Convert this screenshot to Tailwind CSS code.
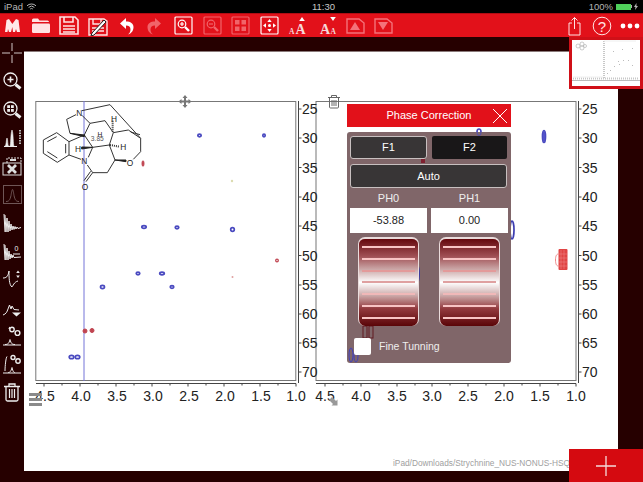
<!doctype html>
<html>
<head>
<meta charset="utf-8">
<script src="https://cdn.jsdelivr.net/npm/@tailwindcss/browser@4"></script>
</head>
<body class="m-0 bg-[#260000]">
<div class="relative w-[643px] h-[482px] overflow-hidden flex flex-col bg-[#260000] font-['Liberation_Sans',Arial,sans-serif]">

  <!-- status bar -->
  <div class="h-[13px] bg-black flex items-center px-1 text-[9.5px] leading-none text-[#b5b5b5] shrink-0">
    <span>iPad</span>
    <svg class="ml-[3px]" width="11" height="8" viewBox="0 0 11 8" fill="none" stroke="#b5b5b5" stroke-width="1"><path d="M1 2.8a6.5 6.5 0 0 1 9 0M2.6 4.4a4.2 4.2 0 0 1 5.8 0M4.2 6a2 2 0 0 1 2.6 0"/></svg>
    <span class="absolute left-[312px] top-[2px] text-[#c8c8c8]">11:30</span>
    <span class="ml-auto">100%</span>
    <span class="ml-[3px] w-[15px] h-[6px] bg-[#4fd05a] block"></span>
    <span class="w-[1px] h-[3px] bg-[#aaa] block"></span>
    <svg class="ml-[2px] mr-[1px]" width="4" height="7" viewBox="0 0 4 7"><path d="M2.5 0 0 4h1.5L1 7l3-4H2.4z" fill="#b5b5b5"/></svg>
  </div>

  <!-- toolbar -->
  <div class="h-[24px] bg-[#e2111a] flex items-center shrink-0 border-t border-[#b00c13]">
    <div class="flex -ml-[2.3px]">
      <div class="w-[28.6px] h-[24px] flex items-center justify-center">
        <svg width="17" height="15" viewBox="0 0 17 15"><path d="M1 14 2.5 2 5 1l3.3 5L12 1l2.5 1L16 14h-3l-1-3-1 3H9L8.3 9 7 14H5l-1-3-.5 3z" fill="#ffe9e9"/></svg>
      </div>
      <div class="w-[28.6px] h-[24px] flex items-center justify-center">
        <svg width="20" height="17" viewBox="0 0 20 17" fill="#ffe3e3"><path d="M1 3q0-1.500 1.500-1.500h4.500l1.500 2h8q1.500 0 1.500 1.500V5H1z"/><rect x="1" y="6.500" width="18" height="9.500" rx="1.200"/></svg>
      </div>
      <div class="w-[28.6px] h-[24px] flex items-center justify-center">
        <svg width="20" height="19" viewBox="0 0 20 19" fill="none" stroke="#ffe3e3" stroke-width="1.600"><path d="M1 1h15l3 3v14H1z"/><path d="M5 1v5h9V1M4 10h12M4 13h12M4 16h12"/></svg>
      </div>
      <div class="w-[28.6px] h-[24px] flex items-center justify-center">
        <svg width="22" height="20" viewBox="0 0 22 20" fill="none" stroke="#ffe3e3" stroke-width="1.400"><path d="M2 3h15l3 2v14H2z"/><path d="M6 3v5h8V3M5 12h12M5 15h12"/><path d="M5 17 17 4l2 2L7 19l-3 1z" fill="#fff" stroke="#222" stroke-width="1"/></svg>
      </div>
      <div class="w-[28.6px] h-[24px] flex items-center justify-center">
        <svg width="15" height="18" viewBox="0 0 15 18"><path d="M7 1 1 6.500 7 12V8.500c3 0 4.500 1.500 4.500 4 0 2-1 4-2.500 5 3.500-1 5.500-4 5.500-7.500C14.500 6.500 11.500 4.500 7 4.500z" fill="#fff"/></svg>
      </div>
      <div class="w-[28.6px] h-[24px] flex items-center justify-center">
        <svg width="15" height="18" viewBox="0 0 15 18"><path d="M8 1l6 5.500L8 12V8.500c-3 0-4.500 1.500-4.500 4 0 2 1 4 2.500 5-3.500-1-5.500-4-5.500-7.500C.5 6.500 3.500 4.500 8 4.500z" fill="#f1646a"/></svg>
      </div>
      <div class="w-[28.6px] h-[24px] flex items-center justify-center">
        <svg width="19" height="19" viewBox="0 0 19 19" fill="none" stroke="#fff" stroke-width="1.200"><rect x="1" y="1" width="17" height="17" rx="1"/><circle cx="8" cy="8" r="3.800"/><path d="M6 8h4M8 6v4"/><path d="M11 11l4 4" stroke-width="2.400"/></svg>
      </div>
      <div class="w-[28.6px] h-[24px] flex items-center justify-center">
        <svg width="19" height="19" viewBox="0 0 19 19" fill="none" stroke="#f1646a" stroke-width="1.200"><rect x="1" y="1" width="17" height="17" rx="1"/><circle cx="8" cy="8" r="3.800"/><path d="M6 8h4"/><path d="M11 11l4 4" stroke-width="2.400"/></svg>
      </div>
      <div class="w-[28.6px] h-[24px] flex items-center justify-center">
        <svg width="19" height="19" viewBox="0 0 19 19" fill="#f1646a" stroke="#f1646a" stroke-width="1.200"><rect x="1" y="1" width="17" height="17" rx="1" fill="none"/><rect x="4" y="4" width="4.500" height="4.500" stroke="none"/><rect x="10.500" y="4" width="4.500" height="4.500" stroke="none"/><rect x="4" y="10.500" width="4.500" height="4.500" stroke="none"/><rect x="10.500" y="10.500" width="4.500" height="4.500" stroke="none"/></svg>
      </div>
      <div class="w-[28.6px] h-[24px] flex items-center justify-center">
        <svg width="19" height="19" viewBox="0 0 19 19" fill="#fff"><rect x="1" y="1" width="17" height="17" rx="1" fill="none" stroke="#fff" stroke-width="1.200"/><path d="M9.500 3l2.200 3h-4.400zM9.500 16l2.200-3h-4.400zM3 9.500l3-2.200v4.400zM16 9.500l-3-2.200v4.400z"/><circle cx="9.500" cy="9.500" r="1.500"/></svg>
      </div>
      <div class="w-[28.6px] h-[24px] flex items-center justify-center">
        <svg width="24" height="24" viewBox="0 0 24 24" fill="#f6d8d8" font-family="'Liberation Serif',serif" font-weight="700"><text x="3" y="20" font-size="7.500">A</text><text x="9.500" y="20" font-size="14">A</text><path d="M18 3l2.800 4h-5.600z" fill="#fff" transform="translate(-2 0)"/></svg>
      </div>
      <div class="w-[28.6px] h-[24px] flex items-center justify-center">
        <svg width="24" height="24" viewBox="0 0 24 24" fill="#f6d8d8" font-family="'Liberation Serif',serif" font-weight="700"><text x="5" y="20" font-size="14">A</text><text x="15.500" y="20" font-size="7.500">A</text><path d="M18 7l2.800-4h-5.600z" fill="#fff"/></svg>
      </div>
      <div class="w-[28.6px] h-[24px] flex items-center justify-center">
        <svg width="19" height="16" viewBox="0 0 19 16" fill="none" stroke="#f4727a" stroke-width="1.400"><path d="M1 1h12l5 4v10H1z"/><path d="M4 12l5-8 5 8z" fill="#f4727a" stroke="none"/></svg>
      </div>
      <div class="w-[28.6px] h-[24px] flex items-center justify-center">
        <svg width="19" height="16" viewBox="0 0 19 16" fill="none" stroke="#f4727a" stroke-width="1.400"><path d="M1 1h12l5 4v10H1z"/><path d="M4 4l5 8 5-8z" fill="#f4727a" stroke="none"/></svg>
      </div>
    </div>
    <div class="flex ml-auto -mr-[1px]">
      <div class="w-[28px] h-[24px] flex items-center justify-center">
        <svg width="13" height="20" viewBox="0 0 13 20" fill="none" stroke="#ffe3e3" stroke-width="1"><path d="M4 7H1v12h11V7H9"/><path d="M6.500 13V1.500M3.500 4.500l3-3 3 3"/></svg>
      </div>
      <div class="w-[28px] h-[24px] flex items-center justify-center">
        <svg width="20" height="20" viewBox="0 0 20 20"><circle cx="10" cy="10" r="8.800" fill="none" stroke="#ffe3e3" stroke-width="1"/><text x="10" y="15.500" font-size="15" text-anchor="middle" fill="#ffe3e3" font-family="'Liberation Sans',sans-serif">?</text></svg>
      </div>
      <div class="w-[28px] h-[24px] flex items-center justify-center">
        <svg width="20" height="6" viewBox="0 0 20 6" fill="#fff"><circle cx="3" cy="3" r="2.400"/><circle cx="10" cy="3" r="2.400"/><circle cx="17" cy="3" r="2.400"/></svg>
      </div>
    </div>
  </div>

  <!-- main -->
  <div class="flex flex-1 min-h-0">
    <!-- sidebar -->
    <div class="w-[24px] pt-[2px] shrink-0 flex flex-col">
      <div class="h-[28.25px] flex items-center justify-center"><svg width="20" height="20" viewBox="0 0 20 20" stroke="#cfc5c5" stroke-width="1"><path d="M0 10h8M12 10h8M10 0v8M10 12v8"/></svg></div>
      <div class="h-[28.25px] flex items-center justify-center"><svg width="20" height="20" viewBox="0 0 20 20" fill="none" stroke="#eee" stroke-width="1.300"><circle cx="8.500" cy="8.500" r="6.500"/><path d="M5.500 8.500h6M8.500 5.500v6" stroke-width="1.600"/><path d="M13.500 13.500l5 4" stroke-width="3"/></svg></div>
      <div class="h-[28.25px] flex items-center justify-center"><svg width="20" height="20" viewBox="0 0 20 20" fill="none" stroke="#eee" stroke-width="1.300"><circle cx="8.500" cy="8.500" r="6.500"/><path d="M13.500 13.500l5 4" stroke-width="3"/><g fill="#eee" stroke="none"><rect x="5.200" y="5.200" width="2.800" height="2.800"/><rect x="9" y="5.200" width="2.800" height="2.800"/><rect x="5.200" y="9" width="2.800" height="2.800"/><rect x="9" y="9" width="2.800" height="2.800"/></g></svg></div>
      <div class="h-[28.25px] flex items-center justify-center"><svg width="20" height="20" viewBox="0 0 20 20" fill="none" stroke="#eee"><path d="M2 18.500h13" stroke-width="1"/><path d="M3 18C4.500 17 4 12 5 10c1 2 .5 7 1.500 8M8 18c1-1 .5-13 2-16 1.500 3 1 15 2 16" fill="#eee" stroke-width=".6"/><path d="M18 2v15" stroke-dasharray="1.500 1" stroke-width="2" stroke="#bbb"/></svg></div>
      <div class="h-[28.25px] flex items-center justify-center"><svg width="20" height="20" viewBox="0 0 20 20" fill="none" stroke="#ddd" stroke-width="1"><rect x="1" y="7" width="18" height="12"/><path d="M5 7V2h14v5" stroke-dasharray="2 1"/><path d="M6 9l8 8M14 9l-8 8" stroke-width="2.800"/><path d="M8 4h6" stroke-width="2"/></svg></div>
      <div class="h-[28.25px] flex items-center justify-center"><svg width="19" height="19" viewBox="0 0 19 19" fill="none" stroke="#6f5656" stroke-width="1"><rect x=".5" y=".5" width="18" height="18"/><path d="M3 16.500c3 0 4-1.500 5-6 .5-3 1-6 1.500-6s1 3 1.500 6c1 4.500 2 6 5 6"/></svg></div>
      <div class="h-[28.25px] flex items-center justify-center"><svg width="20" height="20" viewBox="0 0 20 20" fill="none" stroke="#eee" stroke-width="1"><path d="M2 1 3 19M3 2 4 19 5 5l1 14L7 8l1 10 1-7 1 6 1-4 1 3.500 1-3 1 2.500 1-2 1 1.500 3-1"/></svg></div>
      <div class="h-[28.25px] flex items-center justify-center"><svg width="20" height="20" viewBox="0 0 20 20" fill="none" stroke="#eee" stroke-width="1"><path d="M2 3 3 19M3 4 4 19 5 7l1 12L7 10l1 8 1-5 1 4 1-3 1 2.500 7-.5"/><text x="14.500" y="10" font-size="7" fill="#eee" stroke="none" text-anchor="middle" font-family="'Liberation Sans',sans-serif">0</text><path d="M11 13h7"/></svg></div>
      <div class="h-[28.25px] flex items-center justify-center"><svg width="20" height="20" viewBox="0 0 20 20" fill="none" stroke="#eee" stroke-width="1"><path d="M1 9c3 0 5-1 6-7 0 6 0 14 3 16 1-1 2-5 6-6"/><path d="M16 1.500l-1.800 2.500h3.600zM16 9l-1.800-2.500h3.600z" fill="#eee" stroke="none"/></svg></div>
      <div class="h-[28.25px] flex items-center justify-center"><svg width="20" height="20" viewBox="0 0 20 20" fill="none" stroke="#eee" stroke-width="1"><path d="M1 18c3-1 4-3 5-6l1.500-4 1.500 4 1-3 2 3.500 5 .5"/><path d="M10 15.500h9l-4.500 4z" fill="#eee" stroke="none"/></svg></div>
      <div class="h-[28.25px] flex items-center justify-center"><svg width="20" height="20" viewBox="0 0 20 20" fill="none" stroke="#eee" stroke-width="1"><path d="M1 19h18M3 18.500c3 0 4-1 5-5 1 4 2 5 5 5"/><circle cx="10" cy="3.500" r="2.200" stroke-width="1.400"/><circle cx="15.500" cy="7" r="2.400" stroke-width="1.400"/><path d="M7 3l1-2" stroke-width="1.400"/></svg></div>
      <div class="h-[28.25px] flex items-center justify-center"><svg width="20" height="20" viewBox="0 0 20 20" fill="none" stroke="#eee" stroke-width="1"><path d="M1 19h18M6 18.500c2 0 3-1 4-5 1 4 1.500 5 3 5"/><path d="M3 17c0-5 1-14 2-14.500" /><circle cx="11" cy="3.500" r="2" stroke-width="1.400"/><circle cx="16" cy="7" r="2.200" stroke-width="1.400"/></svg></div>
      <div class="h-[28.25px] flex items-center justify-center"><svg width="16" height="19" viewBox="0 0 16 19" fill="none" stroke="#eee" stroke-width="1.300"><path d="M0 3.500h16M5 3.500V1h6v2.500"/><path d="M2 3.500v13q0 1.500 1.500 1.500h9q1.500 0 1.500-1.500v-13"/><path d="M5.500 6v9M8 6v9M10.500 6v9" stroke-width="1.200"/></svg></div>
    </div>

    <!-- right part -->
    <div class="flex-1 flex flex-col min-w-0">
      <div class="h-[14px] shrink-0"></div>
      <div class="relative w-[594px] h-[420px] bg-white border-t border-[#8a7a7a]">
        <!-- free canvas: spectra -->
        <svg class="absolute left-0 top-[-1px]" width="594" height="420" viewBox="24 51 594 420" font-family="'Liberation Sans',Arial,sans-serif" font-size="14" fill="#222">
          <rect x="35.800" y="101.500" width="260" height="279" fill="none" stroke="#777" stroke-width="1"/>
          <rect x="316" y="101.500" width="260" height="279" fill="none" stroke="#777" stroke-width="1"/>
          <g stroke="#444" stroke-width="1" fill="none">
            <path d="M36 383.500h260M44 383.500v3M80 383.500v3M116 383.500v3M152 383.500v3M188 383.500v3M224 383.500v3M260 383.500v3M296 383.500v3M62 383.500v2M98 383.500v2M134 383.500v2M170 383.500v2M206 383.500v2M242 383.500v2M278 383.500v2"/>
            <path d="M316 383.500h260M325 383.500v3M361 383.500v3M397 383.500v3M432 383.500v3M468 383.500v3M504 383.500v3M540 383.500v3M576 383.500v3M343 383.500v2M379 383.500v2M415 383.500v2M450 383.500v2M486 383.500v2M522 383.500v2M558 383.500v2"/>
            <path d="M298.500 101v282M298.500 109h3M298.500 138h3M298.500 167.500h3M298.500 197h3M298.500 226h3M298.500 255.500h3M298.500 285h3M298.500 314h3M298.500 343h3M298.500 372h3"/>
            <path d="M578.500 101v282M578.500 109h3M578.500 138h3M578.500 167.500h3M578.500 197h3M578.500 226h3M578.500 255.500h3M578.500 285h3M578.500 314h3M578.500 343h3M578.500 372h3"/>
          </g>
          <g text-anchor="middle">
            <text x="45" y="401">4.5</text><text x="81" y="401">4.0</text><text x="117" y="401">3.5</text><text x="153" y="401">3.0</text><text x="189" y="401">2.5</text><text x="225" y="401">2.0</text><text x="261" y="401">1.5</text><text x="296" y="401">1.0</text>
            <text x="325" y="401">4.5</text><text x="361" y="401">4.0</text><text x="397" y="401">3.5</text><text x="432" y="401">3.0</text><text x="468" y="401">2.5</text><text x="504" y="401">2.0</text><text x="540" y="401">1.5</text><text x="576" y="401">1.0</text>
          </g>
          <g>
            <text x="302" y="114">25</text><text x="302" y="143">30</text><text x="302" y="172.500">35</text><text x="302" y="202">40</text><text x="302" y="231">45</text><text x="302" y="260.500">50</text><text x="302" y="290">55</text><text x="302" y="319">60</text><text x="302" y="348">65</text><text x="302" y="377">70</text>
            <text x="582" y="114">25</text><text x="582" y="143">30</text><text x="582" y="172.500">35</text><text x="582" y="202">40</text><text x="582" y="231">45</text><text x="582" y="260.500">50</text><text x="582" y="290">55</text><text x="582" y="319">60</text><text x="582" y="348">65</text><text x="582" y="377">70</text>
          </g>
          <path d="M84 101v280" stroke="#7474d8" stroke-width="1"/>
          <g fill="none" stroke="#4a4ac0" stroke-width="1.700">
            <ellipse cx="199.500" cy="135.500" rx="1.700" ry="1.300"/><ellipse cx="264" cy="135.500" rx="1.200" ry="1.300"/>
            <ellipse cx="144" cy="227" rx="2.200" ry="1.300"/><ellipse cx="177" cy="227.500" rx="1.800" ry="1.300"/><ellipse cx="232.500" cy="229.500" rx="1.800" ry="1.800"/>
            <ellipse cx="138" cy="273.500" rx="1.800" ry="1.300"/><ellipse cx="162" cy="273.500" rx="2.300" ry="1.300"/><ellipse cx="172" cy="287" rx="1.800" ry="1.300"/><ellipse cx="102.500" cy="287" rx="2" ry="1.600"/>
            <ellipse cx="71.500" cy="357" rx="2.300" ry="1.700"/><ellipse cx="77.500" cy="357" rx="2.300" ry="1.700"/>
            <ellipse cx="544" cy="136.500" rx="1.500" ry="6" fill="#5a5ad0"/><ellipse cx="512" cy="230" rx="2" ry="9" stroke="#3c3cb0"/><ellipse cx="479" cy="132" rx="2" ry="3"/>
          </g>
          <g fill="#c04450" stroke="#c04450" stroke-width="1">
            <ellipse cx="143" cy="163.500" rx="1" ry="2.800"/><ellipse cx="85" cy="331" rx="2" ry="2"/><ellipse cx="92" cy="330.500" rx="2" ry="2"/>
            <ellipse cx="277" cy="260.500" rx="1.300" ry="1.300" fill="none" stroke-width="1.300"/>
          </g>
          <circle cx="232" cy="181" r="1.200" fill="#dcdcb0"/><circle cx="232.500" cy="277" r="1" fill="#e0a0a0"/>
          <rect x="558.500" y="249" width="9" height="21" rx="1" fill="#e04444"/><path d="M558.500 254c-2 0-3 2-3 6s1 6 3 6" fill="none" stroke="#ee8888"/>
          <g stroke="#f08a8a" stroke-width=".5"><path d="M561 250v19M564 250v19M559 254h8M559 258h8M559 262h8M559 266h8"/></g>
          <g fill="#777"><path d="M185 95l2.500 3h-1.500v2.500h2.500V99l3 2.500-3 2.500v-1.500h-2.500v2.500h1.500l-2.500 3-2.500-3h1.500v-2.500h-2.500v1.500l-3-2.500 3-2.500v1.500h2.500V98h-1.500z"/></g>
          <g fill="none" stroke="#666" stroke-width="1"><path d="M328 97.500h12M331.500 97.500v-2h5v2"/><path d="M329.500 97.500v9.500q0 1 1 1h7q1 0 1-1v-9.500M332 100v6M334 100v6M336 100v6"/></g>
          <g fill="#8a8a8a"><rect x="29" y="393" width="13" height="3"/><rect x="29" y="398" width="13" height="3"/><rect x="29" y="403" width="13" height="3"/></g>
          <path d="M332 398l4 4 1.500-1.500v6h-6l1.500-1.500-4-4z" fill="#999" transform="translate(0 -1)"/>
          <g transform="translate(0 100) scale(.3333)" fill="none" stroke="#333" stroke-width="3">
            <path d="M130 120 170 98 207 125 207 165 172 187 130 160ZM142 125 170 110M197 132V160M142 155 172 174"/>
            <path d="M228 44 200 58 210 100M207 125 253 105 270 70 246 46M246 32 330 14 422 115M270 70 315 62 340 98 385 90 422 115 422 155 400 178M392 96 420 104M340 98 328 135 278 142 253 105M328 135 345 180 322 218 278 218 262 195M278 142 265 172M207 165 243 178M278 218 258 245M272 214 252 242"/>
            <path d="M210 100 253 105 253 110Z" fill="#222" stroke="#222"/>
            <path d="M345 180 378 185 378 180Z" fill="#222" stroke="#222"/>
            <path d="M278 142 245 147 245 141Z" fill="#222" stroke="#222"/>
            <path d="M338 95V62" stroke-dasharray="3 3" stroke-width="6"/>
            <path d="M330 135 358 140" stroke-dasharray="3 3" stroke-width="6"/>
            <g fill="#222" stroke="none" font-size="25">
              <text x="238" y="48" text-anchor="middle">N</text><text x="253" y="192" text-anchor="middle">N</text><text x="255" y="269" text-anchor="middle">O</text><text x="390" y="199" text-anchor="middle">O</text><text x="234" y="155" text-anchor="middle">H</text><text x="370" y="151" text-anchor="middle">H</text><text x="342" y="65" text-anchor="middle">H</text>
              <text x="300" y="112" text-anchor="middle" font-size="20">H</text><text x="292" y="122" text-anchor="middle" font-size="20" fill="#555">3.85</text>
            </g>
          </g>
          <text x="393" y="466" font-size="8.300" fill="#a0a0a0">iPad/Downloads/Strychnine_NUS-NONUS-HSQC_01.mnova</text>
        </svg>

        <!-- phase correction panel -->
        <div class="absolute left-[323px] top-[52px] w-[164px]">
          <div class="h-[23px] bg-[#e2111a] relative flex items-center justify-center text-[11px] text-white">
            Phase Correction
            <svg class="absolute right-[3px] top-[4px]" width="16" height="16" viewBox="0 0 16 16" stroke="#fff" stroke-width="1"><path d="M1 1l14 14M15 1 1 15"/></svg>
          </div>
          <div class="relative mt-[5px] h-[231px] bg-[#806669] rounded-[3px] px-[3px] pt-[4px]">
            <svg class="absolute left-0 top-0" width="164" height="231" viewBox="347 132 164 231" fill="none">
              <ellipse cx="479" cy="133" rx="2" ry="2.500" stroke="#5050b0"/>
              <rect x="421" y="159" width="4" height="4" fill="#802030"/>
              <ellipse cx="418" cy="274" rx="1.500" ry="8" stroke="#3a3aa0"/>
              <rect x="363" y="326" width="4" height="12" stroke="#601820"/><rect x="369" y="326" width="4" height="12" stroke="#601820"/>
              <ellipse cx="351" cy="355" rx="2" ry="7" stroke="#4040c0"/><ellipse cx="356" cy="356" rx="2" ry="6" stroke="#4040c0"/>
            </svg>
            <div class="relative">
              <div class="flex gap-[5px]">
                <div class="w-[77px] h-[23px] bg-[#383536] border border-[#c8c0c0] rounded-[3px] flex items-center justify-center text-[11px] text-white">F1</div>
                <div class="w-[75px] h-[23px] bg-[#191718] rounded-[2px] flex items-center justify-center text-[11px] text-white">F2</div>
              </div>
              <div class="mt-[5px] w-[157px] h-[24px] bg-[#383536] border border-[#c8c0c0] rounded-[3px] flex items-center justify-center text-[11px] text-white">Auto</div>
              <div class="flex gap-[4px] mt-[3px]">
                <div class="w-[77px]"><div class="h-[17px] pb-[3px] flex items-center justify-center text-[11px] text-[#eee]">PH0</div><div class="h-[25px] bg-white flex items-center justify-center text-[11px] text-[#222]">-53.88</div></div>
                <div class="w-[77px]"><div class="h-[17px] pb-[3px] flex items-center justify-center text-[11px] text-[#eee]">PH1</div><div class="h-[25px] bg-white flex items-center justify-center text-[11px] text-[#222]">0.00</div></div>
              </div>
              <div class="flex gap-[20px] ml-[8px] mt-[4px]">
                <div class="w-[61px] h-[89px] rounded-[7px] border-t-2 border-x border-[#eadcdc] flex flex-col justify-between px-[3px] py-[7px] bg-[linear-gradient(#64070c,#a05055_20%,#cba8a8_35%,#fff_50%,#cba8a8_65%,#933a3e_80%,#5a0508)]">
                  <div class="h-[2px] bg-[#f8c4c4]"></div><div class="h-[2px] bg-[#f8c4c4]"></div><div class="h-[2px] bg-[#e39a9a]"></div><div class="h-[2px] bg-[#dfa0a0]"></div><div class="h-[2px] bg-[#f0b8b8]"></div><div class="h-[2px] bg-[#f8c4c4]"></div><div class="h-[2px] bg-[#f8c4c4]"></div>
                </div>
                <div class="w-[61px] h-[89px] rounded-[7px] border-t-2 border-x border-[#eadcdc] flex flex-col justify-between px-[3px] py-[7px] bg-[linear-gradient(#64070c,#a05055_20%,#cba8a8_35%,#fff_50%,#cba8a8_65%,#933a3e_80%,#5a0508)]">
                  <div class="h-[2px] bg-[#f8c4c4]"></div><div class="h-[2px] bg-[#f8c4c4]"></div><div class="h-[2px] bg-[#e39a9a]"></div><div class="h-[2px] bg-[#dfa0a0]"></div><div class="h-[2px] bg-[#f0b8b8]"></div><div class="h-[2px] bg-[#f8c4c4]"></div><div class="h-[2px] bg-[#f8c4c4]"></div>
                </div>
              </div>
              <div class="flex items-center mt-[12px] ml-[4px]">
                <div class="w-[17px] h-[17px] bg-white rounded-[2px]"></div>
                <span class="ml-[8px] text-[10.5px] text-[#eee]">Fine Tunning</span>
              </div>
            </div>
          </div>
        </div>
      </div>
    </div>
  </div>

  <!-- thumbnail -->
  <div class="absolute left-[569px] top-[37px] w-[74px] h-[52px] border-[3px] border-[#d01018] bg-white">
    <svg width="68" height="46" viewBox="0 0 68 46">
      <rect x="0" y="40" width="68" height="1" fill="#bbb"/>
      <path d="M1 38.500h65M32 1v37" stroke="#c8c8c8" stroke-width="2" stroke-dasharray="1 1"/>
      <path d="M32 1h32M1 37h30" stroke="#eee"/>
      <g fill="none" stroke="#aaa" stroke-width=".6"><circle cx="6" cy="6" r="2"/><circle cx="10" cy="4" r="2"/><circle cx="10" cy="8" r="2"/><circle cx="13" cy="6" r="1.500"/></g>
      <g fill="#bbb"><rect x="41" y="11" width="1" height="1"/><rect x="50" y="9" width="1" height="1"/><rect x="60" y="8" width="1" height="1"/><rect x="46" y="21" width="1" height="1"/><rect x="51" y="20" width="1" height="1"/><rect x="56" y="20" width="1" height="1"/><rect x="42" y="26" width="1" height="1"/><rect x="47" y="24" width="1" height="1"/><rect x="38" y="30" width="1" height="1"/><rect x="35" y="33" width="1" height="1"/><rect x="60" y="25" width="1" height="1"/></g>
    </svg>
  </div>

  <!-- add button -->
  <div class="absolute left-[569px] top-[449px] w-[74px] h-[33px] bg-[#d50a10] flex items-center justify-center">
    <svg width="20" height="20" viewBox="0 0 20 20" stroke="#f4dcdc" stroke-width="1.300"><path d="M0 10h20M10 0v20"/></svg>
  </div>
</div>
</body>
</html>
